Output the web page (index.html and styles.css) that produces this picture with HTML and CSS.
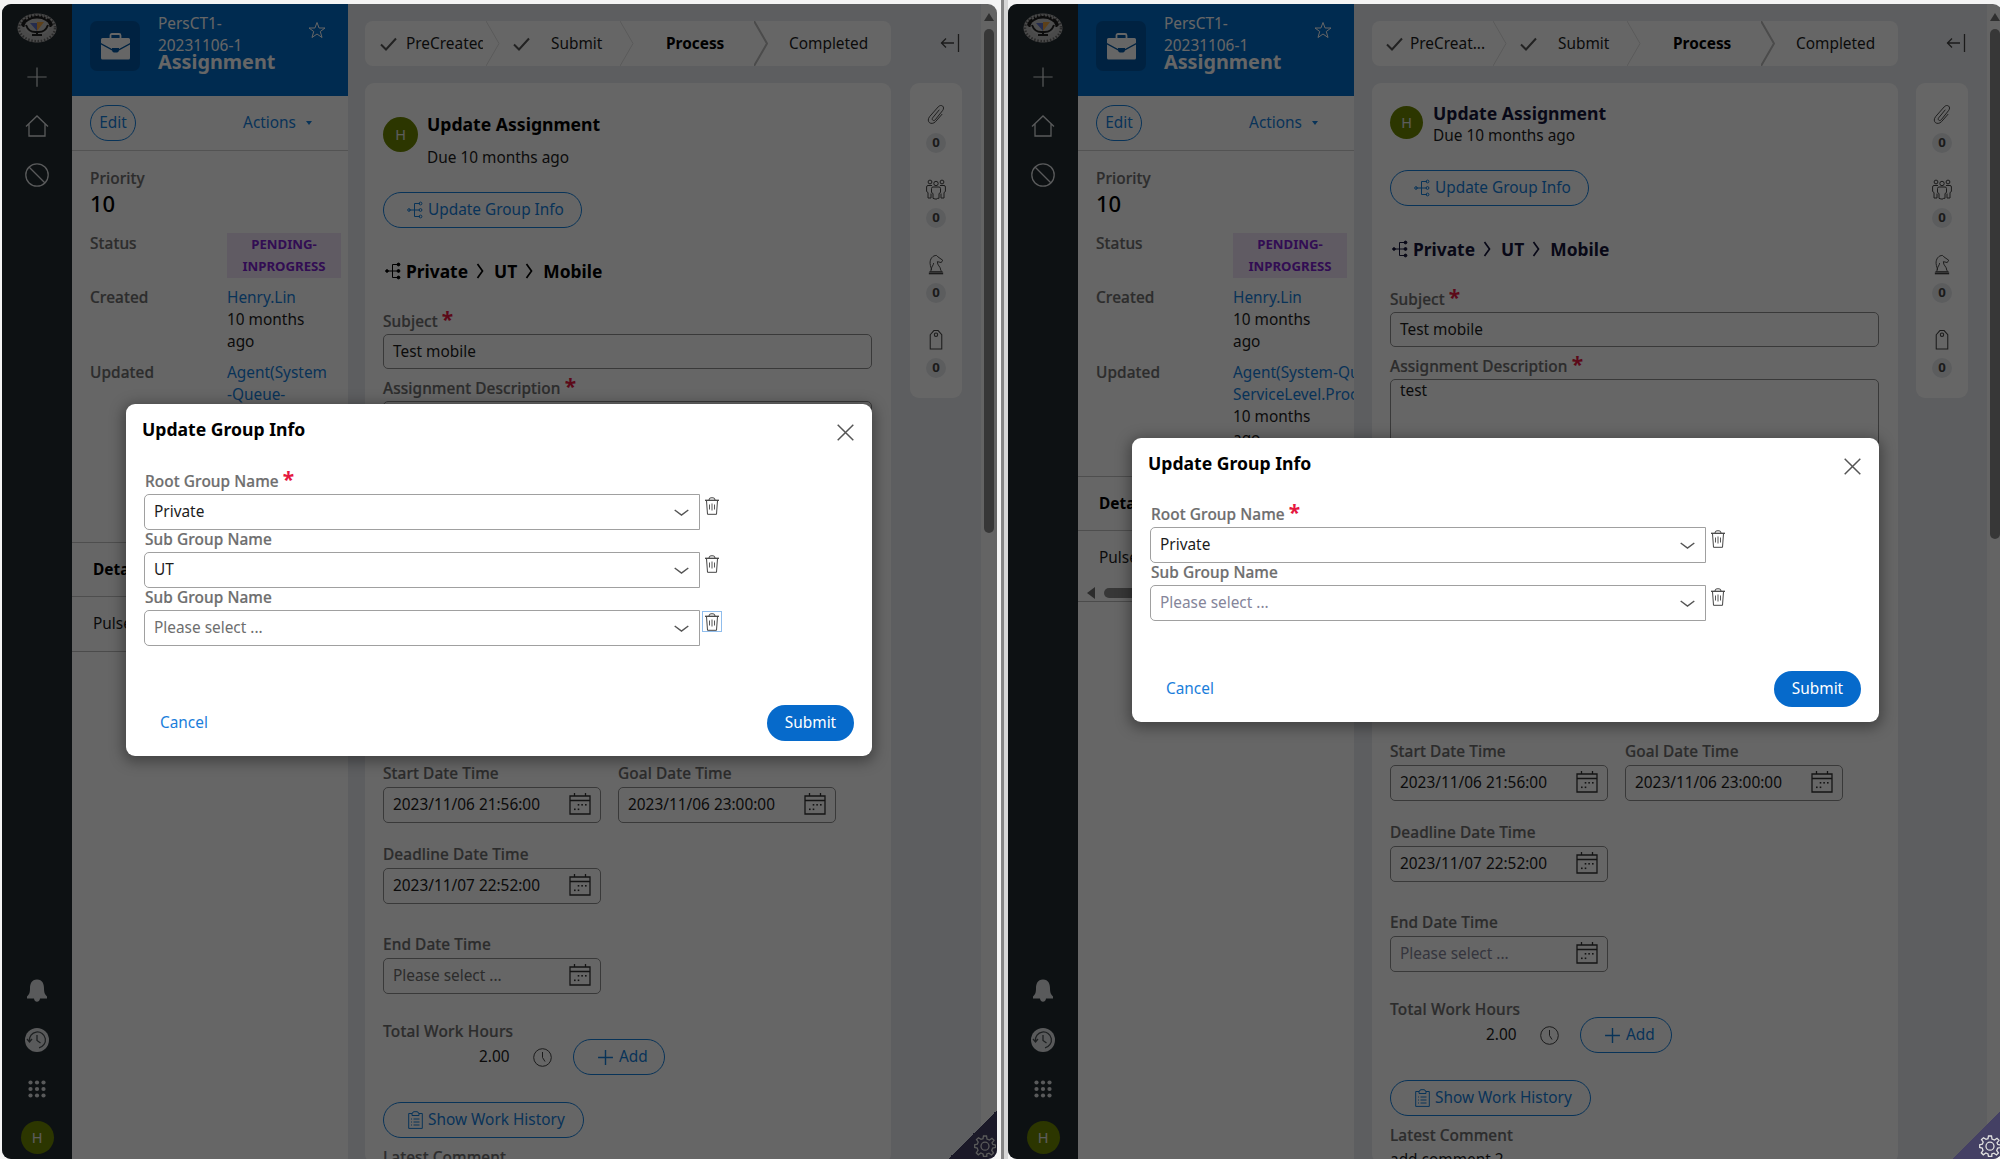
FILE: index.html
```html
<!DOCTYPE html>
<html lang="en">
<head>
    <meta charset="UTF-8">
    <meta name="viewport" content="width=device-width, initial-scale=1.0">
    <title>Assignment - Update Group Info</title>
    <link rel="stylesheet" href="styles.css">
</head>
<body>
    <!-- icon sprite -->
    <svg class="sprite" xmlns="http://www.w3.org/2000/svg">
        <symbol id="i-logo" viewBox="0 0 40 30">
            <ellipse cx="20" cy="15" rx="19.5" ry="14.6" fill="#b9b9b9"/>
            <ellipse cx="20" cy="15" rx="18" ry="13.2" fill="none" stroke="#666" stroke-width="2.5" stroke-dasharray="1.5 1.7"/>
            <path d="M4 12C7 -1 33 -1 36 12L34 14H6z" fill="#1c1c1c"/>
            <path d="M9 6Q20 -2 31 6" fill="none" stroke="#aaa" stroke-width="2" stroke-dasharray="2 1.5"/>
            <ellipse cx="20" cy="14" rx="12.5" ry="8.5" fill="#c4c4c4"/>
            <path d="M9 12Q12 20 20 19Q28 20 31 12M20 18V21M15 22H25" fill="none" stroke="#222" stroke-width="2"/>
            <path d="M13 10H20V18z" fill="#5d6fc0"/>
            <path d="M20 9H27L20 18z" fill="#e8a040"/>
        </symbol>
        <symbol id="i-plus" viewBox="0 0 24 24"><path d="M12 1.5V22.5M1.5 12H22.5"/></symbol>
        <symbol id="i-home" viewBox="0 0 24 24"><path d="M1 12.5L12 2L23 12.5M4 10V22H20V10"/></symbol>
        <symbol id="i-ban" viewBox="0 0 24 24"><circle cx="12" cy="12" r="11.2"/><path d="M4 4L20 20"/></symbol>
        <symbol id="i-bell" viewBox="0 0 24 24"><path d="M12 .5C6.500 .5 5 5 5 9.500C5 14 4 15.500 2 17.500V19.500H9C9.500 23.800 14.500 23.800 15 19.500H22V17.500C20 15.500 19 14 19 9.500C19 5 17.500 .5 12 .5z" fill="currentColor" stroke="none"/></symbol>
        <symbol id="i-history" viewBox="0 0 24 24"><circle cx="12" cy="12" r="12" fill="currentColor" stroke="none"/><path d="M4.500 13A8 8 0 1 1 14 19.800M2 11L4.500 14L7 11M12 7V12.500L15.500 15" stroke="#4a5054" stroke-width="1.3"/></symbol>
        <symbol id="i-apps" viewBox="0 0 18 18"><g fill="currentColor" stroke="none"><circle cx="2.500" cy="2.500" r="2.100"/><circle cx="9" cy="2.500" r="2.100"/><circle cx="15.500" cy="2.500" r="2.100"/><circle cx="2.500" cy="9" r="2.100"/><circle cx="9" cy="9" r="2.100"/><circle cx="15.500" cy="9" r="2.100"/><circle cx="2.500" cy="15.500" r="2.100"/><circle cx="9" cy="15.500" r="2.100"/><circle cx="15.500" cy="15.500" r="2.100"/></g></symbol>
        <symbol id="i-case" viewBox="0 0 29 27"><path d="M9.500 5V2.500Q9.500 1 11 1H18Q19.500 1 19.500 2.500V5" stroke-width="1.8"/><path d="M1.500 5H27.500Q29 5 29 6.500V10L18 16V15H11V16L0 10V6.500Q0 5 1.500 5zM0 11.500L11 17.500Q11.500 19.500 13 19.500H16Q17.500 19.500 18 17.500L29 11.500V25Q29 26.500 27.500 26.500H1.500Q0 26.500 0 25z" fill="currentColor" stroke="none"/></symbol>
        <symbol id="i-star" viewBox="0 0 18 18"><path d="M9 1.500L11.100 7H17L12.300 10.500L14 16.500L9 13L4 16.500L5.700 10.500L1 7H6.900z"/></symbol>
        <symbol id="i-check" viewBox="0 0 17 14"><path d="M1 7.500L6 12.500L16 1.500" stroke-width="2"/></symbol>
        <symbol id="i-collapse" viewBox="0 0 20 18"><path d="M1 9H14M6 4.500L1.500 9L6 13.500M18.500 0V18" stroke-width="1.300"/></symbol>
        <symbol id="i-tree" viewBox="0 0 16 18"><path d="M2 9H13M7.500 2.500V15.500M7.500 2.500H13M7.500 15.500H13" fill="none"/><circle cx="2" cy="9" r="1.300"/><circle cx="13.500" cy="2.500" r="1.400"/><circle cx="13.500" cy="9" r="1.400"/><circle cx="13.500" cy="15.500" r="1.400"/></symbol>
        <symbol id="i-right" viewBox="0 0 8 16"><path d="M1.500 1L6.500 8L1.500 15" stroke-width="1.700"/></symbol>
        <symbol id="i-clip" viewBox="0 0 20 22"><path d="M13.500 6L6.500 14.500C5 16.500 7.500 18.500 9.200 16.500L16.800 7C20 3 15.500 -.5 12.300 3L3.500 13C-1 18.500 5 23 9.500 18.500L16.500 10.500"/></symbol>
        <symbol id="i-people" viewBox="0 0 20 20"><circle cx="4" cy="2.500" r="1.900"/><circle cx="16" cy="2.500" r="1.900"/><circle cx="10" cy="4" r="2.200"/><path d="M7 18.800V14L5.500 13V9Q5.500 7.500 7 7.500H13Q14.500 7.500 14.500 9V13L13 14V18.800H11.500L11 19.500H9zM6 6H2Q.6 6 .6 7.500V12L2 13V18.500H5V14M14 6H18Q19.400 6 19.400 7.500V12L18 13V18.500H15V14"/></symbol>
        <symbol id="i-knight" viewBox="0 0 18 22"><path d="M4 17C4 13 6.500 12 6.500 9.500M4 17C4.500 15 3 13 2.800 10C2.500 5 5.500 1.500 9.500 1.500L11 3L16 6.500L14.500 9L10.500 8C10 12 14 13 14 17L15.500 18.500H2.500L4 17"/><path d="M1.500 20.300H16.500" stroke-width="2"/></symbol>
        <symbol id="i-tag" viewBox="0 0 14 20"><path d="M1.500 5.500L5 1.500H9L12.500 5.500V19H1.500z"/><circle cx="7" cy="5.500" r="1.600"/></symbol>
        <symbol id="i-cal" viewBox="0 0 22 22"><path d="M1 3H21V21H1zM1 7.500H21M5.500 0V3M16.500 0V3" stroke-width="1.300"/><g fill="currentColor" stroke="none"><rect x="5" y="15.500" width="1.600" height="1.600"/><rect x="8.700" y="15.500" width="1.600" height="1.600"/><rect x="8.700" y="11" width="1.600" height="1.600"/><rect x="12.300" y="11" width="1.600" height="1.600"/><rect x="16" y="11" width="1.600" height="1.600"/></g></symbol>
        <symbol id="i-clock" viewBox="0 0 19 19"><circle cx="9.500" cy="9.500" r="8.800"/><path d="M9.500 4V9.500L12 13.500"/></symbol>
        <symbol id="i-note" viewBox="0 0 15 18"><path d="M4 2.500H.7V17.400H14.300V2.500H11M4 4.500V2Q5.500 2 5.500 .7H9.500Q9.500 2 11 2V4.500zM5.500 8H11.500M5.500 11H11.500M5.500 14H11.500M3 8H4M3 11H4M3 14H4"/></symbol>
        <symbol id="i-trash" viewBox="0 0 14 18"><path d="M1.500 3.500L2.500 17.300H11.500L12.500 3.500M4 3Q4 .8 6 .8H8Q10 .8 10 3"/><path d="M4.500 7.500V12.500M7 6.500V13.500M9.500 7.500V12.500" stroke-width=".9"/><path d="M0 3.300H14" stroke-width="1.300"/></symbol>
        <symbol id="i-down" viewBox="0 0 15 8"><path d="M.7 1L7.500 6L14.300 1" stroke-width="1.500"/></symbol>
        <symbol id="i-close" viewBox="0 0 17 17"><path d="M.7 .7L16.300 16.300M16.300 .7L.7 16.300" stroke-width="1.500"/></symbol>
        <symbol id="i-gear" viewBox="0 0 22 22"><path d="M9.500 1H12.500L13 4L15.500 5L18 3.300L20 5.300L18 7.800L18.800 9.500L21.500 10V12.500L18.700 13L17.700 15.500L19.500 18L17.500 20L15 18.200L12.800 19V21.500H9.500L9 19L6.800 18L4.300 19.800L2.300 17.800L4 15.300L3.200 13L.7 12.500V9.700L3.300 9.200L4.200 7L2.500 4.500L4.500 2.700L7 4.300L9 3.700z" stroke-width="1.300"/><circle cx="11" cy="11.200" r="4" stroke-width="1.300"/></symbol>
    </svg>

    <div class="desk">
        <!-- before -->
        <section class="pane pane-old">
            <nav class="rail">
                <svg class="logo"><use href="#i-logo"/></svg>
                <svg class="r-icon"><use href="#i-plus"/></svg>
                <svg class="r-icon"><use href="#i-home"/></svg>
                <svg class="r-icon"><use href="#i-ban"/></svg>
                <span class="push"></span>
                <svg class="r-icon"><use href="#i-bell"/></svg>
                <svg class="r-icon"><use href="#i-history"/></svg>
                <svg class="r-apps"><use href="#i-apps"/></svg>
                <span class="avatar">H</span>
            </nav>

            <aside class="summary">
                <header class="case-head">
                    <span class="case-icon"><svg><use href="#i-case"/></svg></span>
                    <div class="case-name">PersCT1-<br>20231106-1<strong>Assignment</strong></div>
                    <svg class="star"><use href="#i-star"/></svg>
                </header>
                <div class="case-actions">
                    <button class="btn edit">Edit</button>
                    <span class="actions">Actions <i class="caret"></i></span>
                </div>
                <div class="facts">
                    <div class="label">Priority</div>
                    <div class="priority">10</div>
                    <dl>
                        <dt>Status</dt><dd class="badge">PENDING-INPROGRESS</dd>
                        <dt>Created</dt><dd><a>Henry.Lin</a><br>10 months<br>ago</dd>
                        <dt>Updated</dt><dd><a>Agent(System<br>-Queue-</a></dd>
                    </dl>
                </div>
                <div class="tabs">
                    <div class="tab on">Details</div>
                    <div class="tab">Pulse</div>
                </div>
            </aside>

            <main class="work">
                <div class="col">
                    <div class="stages">
                        <div class="stage s1"><svg class="check"><use href="#i-check"/></svg><span class="clip">PreCreated</span></div>
                        <svg class="sep" viewBox="0 0 14 45"><path d="M0 0L13 22.500L0 45"/></svg>
                        <div class="stage s2"><svg class="check"><use href="#i-check"/></svg><span>Submit</span></div>
                        <svg class="sep" viewBox="0 0 14 45"><path d="M0 0L13 22.500L0 45"/></svg>
                        <div class="stage s3"><strong>Process</strong></div>
                        <svg class="sep dark" viewBox="0 0 14 45"><path d="M0 0L13 22.500L0 45"/></svg>
                        <div class="stage s4"><span>Completed</span></div>
                    </div>
                    <div class="card">
                        <div class="task">
                            <span class="avatar">H</span>
                            <div><h2>Update Assignment</h2><p>Due 10 months ago</p></div>
                        </div>
                        <button class="btn group"><svg class="tree"><use href="#i-tree"/></svg>Update Group Info</button>
                        <div class="crumb"><svg class="tree solid"><use href="#i-tree"/></svg>Private<svg class="gt"><use href="#i-right"/></svg>UT<svg class="gt"><use href="#i-right"/></svg>Mobile</div>
                        <div class="label">Subject <b class="req">*</b></div>
                        <div class="input">Test mobile</div>
                        <div class="label desc">Assignment Description <b class="req">*</b></div>
                        <div class="input area"></div>
                        <div class="dates">
                            <div class="date"><div class="label">Start Date Time</div><div class="input">2023/11/06 21:56:00<svg class="cal"><use href="#i-cal"/></svg></div></div>
                            <div class="date"><div class="label">Goal Date Time</div><div class="input">2023/11/06 23:00:00<svg class="cal"><use href="#i-cal"/></svg></div></div>
                        </div>
                        <div class="date deadline"><div class="label">Deadline Date Time</div><div class="input">2023/11/07 22:52:00<svg class="cal"><use href="#i-cal"/></svg></div></div>
                        <div class="date end"><div class="label">End Date Time</div><div class="input empty">Please select ...<svg class="cal"><use href="#i-cal"/></svg></div></div>
                        <div class="label total">Total Work Hours</div>
                        <div class="hours"><span>2.00</span><svg class="clock"><use href="#i-clock"/></svg><button class="btn add"><svg class="plus"><use href="#i-plus"/></svg>Add</button></div>
                        <button class="btn history"><svg class="note"><use href="#i-note"/></svg>Show Work History</button>
                        <div class="label latest">Latest Comment</div>
                    </div>
                </div>
                <div class="side">
                    <svg class="collapse"><use href="#i-collapse"/></svg>
                    <div class="utils">
                        <div class="util"><svg><use href="#i-clip"/></svg><span>0</span></div>
                        <div class="util"><svg><use href="#i-people"/></svg><span>0</span></div>
                        <div class="util"><svg><use href="#i-knight"/></svg><span>0</span></div>
                        <div class="util"><svg><use href="#i-tag"/></svg><span>0</span></div>
                    </div>
                </div>
            </main>

            <div class="scroll"><i class="up"></i><i class="thumb"></i></div>
            <div class="corner"><svg><use href="#i-gear"/></svg></div>
            <div class="mask"></div>

            <div class="modal">
                <header><h2>Update Group Info</h2><svg class="close"><use href="#i-close"/></svg></header>
                <div class="label">Root Group Name <b class="req">*</b></div>
                <div class="pick"><div class="select">Private<svg><use href="#i-down"/></svg></div><span class="trash"><svg><use href="#i-trash"/></svg></span></div>
                <div class="label">Sub Group Name</div>
                <div class="pick"><div class="select">UT<svg><use href="#i-down"/></svg></div><span class="trash"><svg><use href="#i-trash"/></svg></span></div>
                <div class="label">Sub Group Name</div>
                <div class="pick"><div class="select empty">Please select ...<svg><use href="#i-down"/></svg></div><span class="trash focus"><svg><use href="#i-trash"/></svg></span></div>
                <footer><a>Cancel</a><button class="submit">Submit</button></footer>
            </div>
        </section>

        <div class="divider"></div>

        <!-- after -->
        <section class="pane pane-new">
            <nav class="rail">
                <svg class="logo"><use href="#i-logo"/></svg>
                <svg class="r-icon"><use href="#i-plus"/></svg>
                <svg class="r-icon"><use href="#i-home"/></svg>
                <svg class="r-icon"><use href="#i-ban"/></svg>
                <span class="push"></span>
                <svg class="r-icon"><use href="#i-bell"/></svg>
                <svg class="r-icon"><use href="#i-history"/></svg>
                <svg class="r-apps"><use href="#i-apps"/></svg>
                <span class="avatar">H</span>
            </nav>

            <aside class="summary">
                <header class="case-head">
                    <span class="case-icon"><svg><use href="#i-case"/></svg></span>
                    <div class="case-name">PersCT1-<br>20231106-1<strong>Assignment</strong></div>
                    <svg class="star"><use href="#i-star"/></svg>
                </header>
                <div class="case-actions">
                    <button class="btn edit">Edit</button>
                    <span class="actions">Actions <i class="caret"></i></span>
                </div>
                <div class="facts">
                    <div class="label">Priority</div>
                    <div class="priority">10</div>
                    <dl>
                        <dt>Status</dt><dd class="badge">PENDING-INPROGRESS</dd>
                        <dt>Created</dt><dd><a>Henry.Lin</a><br>10 months<br>ago</dd>
                        <dt>Updated</dt><dd class="nowrap"><a>Agent(System-Queue-<br>ServiceLevel.ProcessEvent)</a><br>10 months<br>ago</dd>
                    </dl>
                </div>
                <div class="tabs">
                    <div class="tab on">Details</div>
                    <div class="tab">Pulse</div>
                    <div class="hscroll"><i class="left"></i><i class="hthumb"></i></div>
                </div>
            </aside>

            <main class="work">
                <div class="col">
                    <div class="stages">
                        <div class="stage s1"><svg class="check"><use href="#i-check"/></svg><span>PreCreat...</span></div>
                        <svg class="sep" viewBox="0 0 14 45"><path d="M0 0L13 22.500L0 45"/></svg>
                        <div class="stage s2"><svg class="check"><use href="#i-check"/></svg><span>Submit</span></div>
                        <svg class="sep" viewBox="0 0 14 45"><path d="M0 0L13 22.500L0 45"/></svg>
                        <div class="stage s3"><strong>Process</strong></div>
                        <svg class="sep dark" viewBox="0 0 14 45"><path d="M0 0L13 22.500L0 45"/></svg>
                        <div class="stage s4"><span>Completed</span></div>
                    </div>
                    <div class="card">
                        <div class="task">
                            <span class="avatar">H</span>
                            <div><h2>Update Assignment</h2><p>Due 10 months ago</p></div>
                        </div>
                        <button class="btn group"><svg class="tree"><use href="#i-tree"/></svg>Update Group Info</button>
                        <div class="crumb"><svg class="tree solid"><use href="#i-tree"/></svg>Private<svg class="gt"><use href="#i-right"/></svg>UT<svg class="gt"><use href="#i-right"/></svg>Mobile</div>
                        <div class="label">Subject <b class="req">*</b></div>
                        <div class="input">Test mobile</div>
                        <div class="label desc">Assignment Description <b class="req">*</b></div>
                        <div class="input area">test</div>
                        <div class="dates">
                            <div class="date"><div class="label">Start Date Time</div><div class="input">2023/11/06 21:56:00<svg class="cal"><use href="#i-cal"/></svg></div></div>
                            <div class="date"><div class="label">Goal Date Time</div><div class="input">2023/11/06 23:00:00<svg class="cal"><use href="#i-cal"/></svg></div></div>
                        </div>
                        <div class="date deadline"><div class="label">Deadline Date Time</div><div class="input">2023/11/07 22:52:00<svg class="cal"><use href="#i-cal"/></svg></div></div>
                        <div class="date end"><div class="label">End Date Time</div><div class="input empty">Please select ...<svg class="cal"><use href="#i-cal"/></svg></div></div>
                        <div class="label total">Total Work Hours</div>
                        <div class="hours"><span>2.00</span><svg class="clock"><use href="#i-clock"/></svg><button class="btn add"><svg class="plus"><use href="#i-plus"/></svg>Add</button></div>
                        <button class="btn history"><svg class="note"><use href="#i-note"/></svg>Show Work History</button>
                        <div class="label latest">Latest Comment</div>
                        <div class="comment">add comment 2</div>
                    </div>
                </div>
                <div class="side">
                    <svg class="collapse"><use href="#i-collapse"/></svg>
                    <div class="utils">
                        <div class="util"><svg><use href="#i-clip"/></svg><span>0</span></div>
                        <div class="util"><svg><use href="#i-people"/></svg><span>0</span></div>
                        <div class="util"><svg><use href="#i-knight"/></svg><span>0</span></div>
                        <div class="util"><svg><use href="#i-tag"/></svg><span>0</span></div>
                    </div>
                </div>
            </main>

            <div class="scroll"><i class="up"></i><i class="thumb"></i></div>
            <div class="mask"></div>
            <div class="corner"><svg><use href="#i-gear"/></svg></div>

            <div class="modal">
                <header><h2>Update Group Info</h2><svg class="close"><use href="#i-close"/></svg></header>
                <div class="label">Root Group Name <b class="req">*</b></div>
                <div class="pick"><div class="select">Private<svg><use href="#i-down"/></svg></div><span class="trash"><svg><use href="#i-trash"/></svg></span></div>
                <div class="label">Sub Group Name</div>
                <div class="pick"><div class="select empty">Please select ...<svg><use href="#i-down"/></svg></div><span class="trash"><svg><use href="#i-trash"/></svg></span></div>
                <footer><a>Cancel</a><button class="submit">Submit</button></footer>
            </div>
        </section>
    </div>
</body>
</html>
```

FILE: styles.css
```css
* { box-sizing: border-box; }
body { margin: 0; height: 1159px; overflow: hidden; background: #f4f4f4; font: 15.4px/22px "Noto Sans", "Open Sans", sans-serif; color: #1c1c1c; }
h2, p, dl, dd { margin: 0; }
svg { display: block; flex: none; fill: none; stroke: currentColor; }
button { font: inherit; cursor: pointer; }
.sprite { width: 0; height: 0; position: absolute; }

.desk { display: flex; width: 2002px; height: 1159px; padding-left: 2px; }
.divider { flex: none; width: 11px; border-left: 4px solid #f4f4f4; border-right: 4px solid #d6d6d6; background: #858585; }
.pane { position: relative; flex: none; display: grid; grid-template-columns: 70px 276px 1fr 16px; width: 995px; height: 1155px; margin-top: 4px; border-radius: 9px; overflow: hidden; background: #fff; }
.mask { position: absolute; inset: 0; background: rgba(0,0,0,0.6); }

/* nav rail */
.rail { display: flex; flex-direction: column; align-items: center; padding: 9px 0 7px; background: #222c31; color: #dfe2e4; }
.rail .logo { width: 40px; height: 30px; margin-bottom: 23px; stroke: none; }
.r-icon { width: 24px; height: 24px; margin: 0 0 25px; stroke-width: 1.3; }
.rail .r-icon:nth-child(2) { width: 22px; height: 22px; margin: 0 0 26px; }
.push { flex: 1; }
.r-apps { width: 18px; height: 18px; margin: 3px 0 23px; }
.avatar { flex: none; width: 33px; height: 33px; border-radius: 50%; background: #6f8800; color: #e6e6e6; text-align: center; line-height: 33px; font-size: 14.5px; }
.rail .avatar { margin-bottom: 2px; }

/* case summary */
.summary { overflow: hidden; background: #fff; }
.case-head { display: flex; align-items: flex-start; height: 92px; padding: 17px 22px 0 18px; background: #006bc7; color: #fff; }
.case-icon { display: flex; align-items: center; justify-content: center; flex: none; width: 50px; height: 50px; border-radius: 7px; background: #0056a3; }
.case-icon svg { width: 29px; height: 27px; }
.case-name { width: 140px; margin: -8px 0 0 18px; }
.case-name strong { display: block; margin-top: -6px; font-size: 19.8px; }
.star { width: 18px; height: 18px; margin: 0 0 0 auto; }
.case-actions { display: flex; align-items: center; justify-content: space-between; height: 55px; padding: 0 36px 0 18px; border-bottom: 1px solid #cfcfcf; }
.btn { display: flex; align-items: center; height: 36px; padding: 0; border: 1px solid #1580dd; border-radius: 18px; background: none; color: #1580dd; }
.edit { width: 46px; justify-content: center; }
.actions { display: flex; align-items: center; color: #1580dd; }
.caret { margin-left: 10px; border: 3px solid transparent; border-top: 4px solid #1580dd; border-bottom: 0; }
.facts { height: 391px; padding: 17px 0 0 18px; overflow: hidden; }
.label, dt { color: #6e6e6e; font-weight: 500; letter-spacing: 0.08px; -webkit-text-stroke: 0.2px #6e6e6e; }
.priority { margin: 0; font-size: 22px; line-height: 26px; font-weight: 500; color: #000; }
dl { display: grid; grid-template-columns: 137px 114px; row-gap: 8px; padding-top: 17px; line-height: 22.2px; }
.badge { height: 45px; margin-bottom: 1px; background: #efe4f8; color: #7d22cf; font-size: 13.2px; font-weight: 700; text-align: center; padding: 0 10px; }
.nowrap { white-space: nowrap; }
a { color: #1580dd; }
.tabs { border-top: 1px solid #c4c4c4; border-bottom: 1px solid #bbb; }
.tab { height: 54px; padding-left: 21px; line-height: 54px; }
.tab.on { font-weight: 700; border-bottom: 1px solid #c4c4c4; color: #000; }
.pane-new .facts { height: 325px; }
.hscroll { display: flex; align-items: center; gap: 9px; height: 16px; padding-left: 9px; }
.left { border: 6px solid transparent; border-right: 8px solid #6e6e6e; border-left: 0; }
.hthumb { width: 120px; height: 10px; border-radius: 5px; background: #8a8a8a; }

/* work area */
.work { display: flex; align-items: flex-start; padding: 17px 19px 0 17px; background: #e9ebef; }
.col { width: 526px; margin-right: 19px; }
.stages { display: flex; height: 45px; border-radius: 8px; background: #fff; line-height: 45px; overflow: hidden; }
.stage { display: flex; align-items: center; flex: none; }
.stage strong { color: #000; }
.s1 { width: 121px; padding-left: 15px; }
.s2 { width: 120px; padding-left: 13px; }
.s3 { width: 120px; padding-left: 32px; }
.s4 { padding-left: 21px; }
.check { width: 17px; height: 14px; margin-right: 9px; color: #555; }
.s2 .check { margin-right: 21px; }
.clip { width: 77px; overflow: hidden; }
.pane-new .s1 { padding-left: 14px; }
.pane-new .s1 .check { margin-right: 7px; }
.sep { width: 14px; height: 45px; color: #e0e0e0; }
.sep.dark { color: #bbb; stroke-width: 2; }
.card { height: 1080px; margin-top: 17px; padding: 30px 19px 0 18px; border-radius: 9px; background: #fff; }
.task { display: flex; align-items: flex-start; gap: 9px; }
.task .avatar { width: 35px; height: 35px; margin-top: 4px; line-height: 35px; }
.task h2 { margin-bottom: 12px; font-size: 17.6px; line-height: 22px; color: #000; }
.group { width: 199px; margin-top: 23px; padding-left: 23px; }
.tree { width: 16px; height: 18px; margin-right: 5px; }
.solid { fill: currentColor; }
.crumb { display: flex; align-items: center; margin: 32px 0 29px; padding-left: 2px; font-size: 17.4px; font-weight: 700; color: #000; }
.gt { width: 8px; height: 16px; margin: 0 10px 0 8px; }
.req { color: #e5173f; font-size: 21px; line-height: 10px; -webkit-text-stroke: 0; }
.input { display: flex; align-items: center; height: 35px; margin-top: 1px; padding: 0 6px 0 9px; border: 1px solid #8f8f8f; border-radius: 5px; background: #fff; }
.empty { color: #6e6e6e; }
.desc { margin-top: 9px; }
.area { height: 340px; align-items: flex-start; }
.dates { display: flex; gap: 18px; margin-top: 22px; }
.date { width: 218px; }
.dates { gap: 17px; }
.date .input { height: 36px; margin-top: 2px; }
.cal { width: 22px; height: 22px; margin: -2px 3px 0 auto; color: #333; }
.deadline { margin-top: 21px; }
.end { margin-top: 30px; }
.total { margin-top: 27px; letter-spacing: 0.2px; }
.hours { display: flex; align-items: center; width: 282px; height: 36px; margin-top: -4px; padding-left: 96px; }
.clock { width: 19px; height: 19px; margin: 1px 21px 0 auto; color: #444; }
.add { width: 92px; padding-left: 23px; }
.plus { width: 17px; height: 17px; margin-right: 5px; stroke-width: 2; }
.history { width: 201px; margin-top: 27px; padding-left: 24px; }
.note { width: 15px; height: 18px; margin-right: 5px; }
.latest { margin-top: 9px; }
.comment { margin-top: 2px; }

.pane-new { width: 994px; }
.pane-new .work { padding-left: 18px; }
.pane-new .col { margin-right: 18px; }
.pane-new .card { padding-top: 19px; }
.pane-new .task { gap: 10px; }
.pane-new .task .avatar { width: 33px; height: 33px; line-height: 33px; }
.pane-new .task h2 { margin-bottom: 1px; color: #15153a; }
.pane-new .crumb { color: #15153a; }
.pane-new .empty { color: #85859a; }

.side { width: 52px; }
.collapse { width: 20px; height: 18px; margin: 13px 0 31px 30px; color: #444; }
.utils { height: 315px; padding-top: 21px; border-radius: 9px; background: #fff; }
.util { display: flex; flex-direction: column; align-items: center; height: 75px; color: #444; }
.util svg { width: 20px; height: 21px; }
.util span { width: 20px; height: 20px; margin-top: 8px; border-radius: 50%; background: #e6e8ec; font-size: 13.2px; line-height: 19px; font-weight: 700; text-align: center; }

.scroll { display: flex; flex-direction: column; align-items: center; padding: 9px 0 0; background: #fafafa; }
.up { border: 5px solid transparent; border-bottom: 8px solid #777; border-top: 0; }
.thumb { width: 10px; height: 504px; margin-top: 8px; border-radius: 5px; background: #8b8b8b; }
.pane-new .thumb { height: 510px; }
.corner { position: absolute; right: 0; bottom: 0; width: 49px; height: 49px; background: linear-gradient(135deg, transparent 50%, #444064 50%); color: #e0e0e0; }
.corner svg { width: 22px; height: 22px; margin: 25px 0 0 26px; }

/* dialog */
.modal { position: absolute; left: 124px; top: 400px; width: 746px; height: 352px; padding: 14px 18px 0; border-radius: 9px; background: #fff; box-shadow: 0 3px 14px 3px rgba(0,0,0,0.35); }
.modal header { display: flex; justify-content: space-between; margin-bottom: 30px; }
.modal h2 { margin-left: -2px; font-size: 17.6px; line-height: 22px; color: #000; }
.close { width: 17px; height: 17px; margin: 6px 0 0; color: #555; }
.pick { display: flex; height: 36px; margin-top: 1px; }
.modal .label { padding-left: 1px; }
.pick + .label { margin-top: -1px; }
.select { display: flex; align-items: center; justify-content: space-between; width: 556px; height: 36px; padding: 0 10px 0 9px; border: 1px solid #a0a0a0; border-radius: 5px 0 0 5px; }
.select svg { width: 15px; height: 8px; margin-top: 2px; color: #555; }
.trash { width: 20px; height: 21px; margin: 1px 0 0 2px; padding: 2px; border: 1px solid transparent; color: #444; }
.trash svg { width: 14px; height: 18px; margin-top: -1px; }
.trash.focus { border-color: #90bdec; }
.modal footer { display: flex; align-items: center; justify-content: space-between; margin-top: 59px; padding-left: 16px; }
.modal footer a { color: #1a7edb; }
.submit { width: 87px; height: 36px; border: 0; border-radius: 18px; background: #066acb; color: #fff; }
.pane-new .modal { top: 434px; width: 747px; height: 284px; }
.pane-new .modal header { margin-bottom: 29px; }
.pane-new .modal footer { margin-top: 50px; }
```
